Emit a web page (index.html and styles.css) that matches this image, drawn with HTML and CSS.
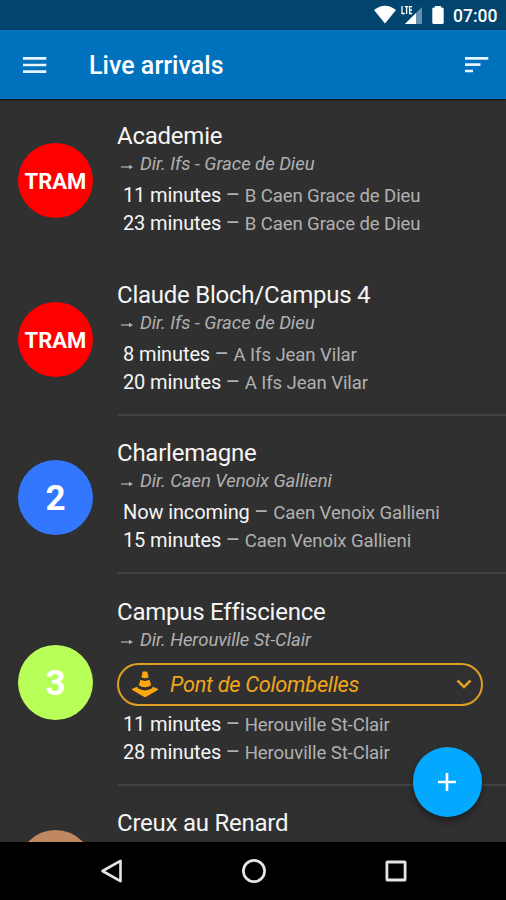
FILE: index.html
```html
<!DOCTYPE html>
<html lang="en">
<head>
<meta charset="utf-8">
<title>Live arrivals</title>
<link rel="stylesheet" href="styles.css">
</head>
<body>
<div class="screen">
  <div class="status">
    <svg class="wifi" width="24" height="20" viewBox="0 0 24 20"><path d="M1 5Q12-3.5 23 5L12 18.5Z" fill="#fff"/></svg>
    <svg class="signal" width="22" height="20" viewBox="0 0 22 20"><path d="M21 2V19H4Z" fill="#6690ae"/><path d="M15 8V19H4Z" fill="#fff"/><path d="M1 1V8.5H3.8M3.8 1.6H7.4M5.6 1.6V9M11.2 1.6H8.6V8.5H11.2M8.6 5H11" fill="none" stroke="#fff" stroke-width="1.3"/></svg>
    <svg class="battery" width="12" height="20" viewBox="0 0 12 20"><path d="M3 1H9V2.5H10.5Q11.7 2.5 11.7 4V17.5Q11.7 19 10.2 19H1.8Q.3 19 .3 17.5V4Q.3 2.5 1.5 2.5H3Z" fill="#fff"/></svg>
    <span class="clock">07:00</span>
  </div>
  <header class="toolbar">
    <svg class="menu" width="24" height="18" viewBox="0 0 24 18"><path d="M0 2.3H23.3M0 9H23.3M0 15.6H23.3" stroke="#e8f4ff" stroke-width="2.7"/></svg>
    <h1>Live arrivals</h1>
    <svg class="sort" width="24" height="18" viewBox="0 0 24 18"><path d="M0 2.3H23.3M0 8.6H15.5M0 15H8" stroke="#e8f4ff" stroke-width="2.7"/></svg>
  </header>
  <main class="list">
    <section class="row">
      <div class="badge tram">TRAM</div>
      <div class="info">
        <h2>Academie</h2>
        <p class="dir"><svg class="arrow" width="12" height="6" viewBox="0 0 12 6"><path d="M0 3H9" stroke="#b5b5b5" stroke-width="1.2"/><path d="M8 .8L12 3L8 5.2Z" fill="#b5b5b5"/></svg>Dir. Ifs - Grace de Dieu</p>
        <p class="time"><b>11 minutes</b> <i>–</i> B Caen Grace de Dieu</p>
        <p class="time"><b>23 minutes</b> <i>–</i> B Caen Grace de Dieu</p>
      </div>
    </section>
    <section class="row ruled">
      <div class="badge tram">TRAM</div>
      <div class="info">
        <h2>Claude Bloch/Campus 4</h2>
        <p class="dir"><svg class="arrow" width="12" height="6" viewBox="0 0 12 6"><path d="M0 3H9" stroke="#b5b5b5" stroke-width="1.2"/><path d="M8 .8L12 3L8 5.2Z" fill="#b5b5b5"/></svg>Dir. Ifs - Grace de Dieu</p>
        <p class="time"><b>8 minutes</b> <i>–</i> A Ifs Jean Vilar</p>
        <p class="time"><b>20 minutes</b> <i>–</i> A Ifs Jean Vilar</p>
      </div>
    </section>
    <section class="row ruled">
      <div class="badge blue">2</div>
      <div class="info">
        <h2>Charlemagne</h2>
        <p class="dir"><svg class="arrow" width="12" height="6" viewBox="0 0 12 6"><path d="M0 3H9" stroke="#b5b5b5" stroke-width="1.2"/><path d="M8 .8L12 3L8 5.2Z" fill="#b5b5b5"/></svg>Dir. Caen Venoix Gallieni</p>
        <p class="time"><b>Now incoming</b> <i>–</i> Caen Venoix Gallieni</p>
        <p class="time"><b>15 minutes</b> <i>–</i> Caen Venoix Gallieni</p>
      </div>
    </section>
    <section class="row ruled">
      <div class="badge lime">3</div>
      <div class="info">
        <h2>Campus Effiscience</h2>
        <p class="dir"><svg class="arrow" width="12" height="6" viewBox="0 0 12 6"><path d="M0 3H9" stroke="#b5b5b5" stroke-width="1.2"/><path d="M8 .8L12 3L8 5.2Z" fill="#b5b5b5"/></svg>Dir. Herouville St-Clair</p>
        <div class="alert">
          <svg width="28" height="27" viewBox="0 0 28 28" fill="#fba70f"><path d="M12.3.5H15.7Q16.3 .5 16.5 1.2L17.7 6.5Q14 8.3 10.3 6.5L11.5 1.2Q11.7 .5 12.3 .5Z"/><path d="M9.3 9.2Q14 11.6 18.7 9.2L20.4 14.8Q14 19 7.6 14.8Z"/><path d="M6.4 16.2L.8 18.4Q-.3 19.1 .8 19.8L12.8 26.8Q14 27.4 15.2 26.8L27.2 19.8Q28.3 19.1 27.2 18.4L21.6 16.2L21.9 17.6Q14 22.6 6.1 17.6Z"/></svg>
          <span>Pont de Colombelles</span>
          <svg class="chevron" width="16" height="10" viewBox="0 0 16 10"><path d="M1.5 1.5L8 8L14.5 1.5" fill="none" stroke="#dea024" stroke-width="2.5"/></svg>
        </div>
        <p class="time"><b>11 minutes</b> <i>–</i> Herouville St-Clair</p>
        <p class="time"><b>28 minutes</b> <i>–</i> Herouville St-Clair</p>
      </div>
    </section>
    <section class="row">
      <div class="badge brown"></div>
      <div class="info"><h2>Creux au Renard</h2></div>
    </section>
  </main>
  <nav class="navbar">
    <svg width="24" height="26" viewBox="0 0 24 26"><path d="M2.5 13L20.5 2.8V23.2Z" fill="none" stroke="#e5e5e5" stroke-width="2.6" stroke-linejoin="round"/></svg>
    <svg width="26" height="26" viewBox="0 0 26 26"><circle cx="13" cy="13" r="10.6" fill="none" stroke="#e5e5e5" stroke-width="2.7"/></svg>
    <svg width="24" height="26" viewBox="0 0 24 26"><rect x="2.9" y="4" width="18.2" height="18" rx=".6" fill="none" stroke="#e5e5e5" stroke-width="2.8"/></svg>
  </nav>
  <button class="fab" aria-label="Add"><svg width="20" height="20" viewBox="0 0 20 20"><path d="M10 1V19M1 10H19" stroke="#fff" stroke-width="2.6"/></svg></button>
</div>
</body>
</html>
```
FILE: styles.css
```css
* { box-sizing: border-box; margin: 0; padding: 0; }
body { background: #000; font-family: Roboto, sans-serif; color: #fff; }
.screen { position: relative; width: 506px; height: 900px; overflow: hidden; display: flex; flex-direction: column; background: #303030; }
.status { flex: none; height: 30px; background: #01446e; display: flex; align-items: center; padding-left: 373px; }
.signal { margin-left: 4px; }
.battery { margin-left: 9px; }
.clock { margin-left: 9px; font-size: 17.5px; font-weight: 500; line-height: 30px; padding-top: 2px; }
.toolbar { flex: none; height: 68.5px; background: #0072bd; display: flex; align-items: center; padding: 2px 17px 0 23px; box-shadow: 0 1px 2px #111; position: relative; }
.toolbar h1 { margin-left: 42px; flex: 1; font-size: 25px; font-weight: 500; line-height: 32px; padding-top: 2px; letter-spacing: .03px; }
.list { flex: 1; overflow: hidden; }
.row { display: flex; height: 158.5px; }
.row:has(.alert) { height: 211.5px; }
.badge { flex: none; width: 75px; height: 75px; margin: 44.5px 24px 0 18px; border-radius: 50%; display: flex; align-items: center; justify-content: center; font-weight: 700; font-size: 35px; padding-top: 2px; }
.tram { background: #f00; font-size: 22px; }
.blue { background: #3377ff; }
.lime { background: #b9ff59; margin-top: 71px; }
.brown { background: #c08860; }
.info { flex: 1; padding-top: 21.8px; }
.ruled .info { border-bottom: 2px solid #424242; }
h2 { font-size: 24px; font-weight: 400; line-height: 32px; color: #f5f5f5; letter-spacing: -.24px; }
.dir { display: flex; align-items: center; font-size: 18.5px; line-height: 25px; font-style: italic; color: #b0b0b0; letter-spacing: -.05px; }
.arrow { margin: 4px 7px 0 4px; }
.time { padding-left: 6px; font-size: 18.6px; line-height: 26.7px; color: #b0b0b0; letter-spacing: -.1px; position: relative; top: 5px; }
.time b { font-size: 20px; font-weight: 400; color: #f5f5f5; letter-spacing: -.12px; }
.time i { font-style: normal; font-size: 22px; line-height: 0; letter-spacing: 0; }
.alert { height: 43px; width: 366px; margin: 10px 0 0; border: 2.5px solid #dea024; border-radius: 22px; display: flex; align-items: center; padding: 0 9px 0 12px; font-size: 21.8px; letter-spacing: -.3px; font-style: italic; color: #f0a51c; }
.alert span { flex: 1; margin-left: 11px; }
.navbar { flex: none; height: 58px; background: #000; display: flex; align-items: center; justify-content: space-between; padding: 0 98px 0 100px; }
.fab { position: absolute; left: 412.7px; top: 747px; width: 69.5px; height: 69.5px; border: 0; border-radius: 50%; background: #03a9ff; display: flex; align-items: center; justify-content: center; box-shadow: 0 4px 7px rgba(0,0,0,.4); }
```
